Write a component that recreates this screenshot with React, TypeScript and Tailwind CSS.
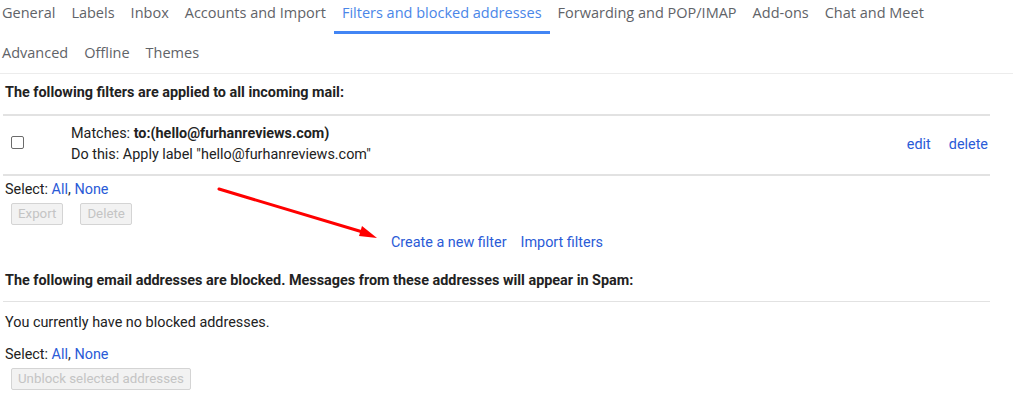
import React from "react";

const tabsRow1 = [
  "General",
  "Labels",
  "Inbox",
  "Accounts and Import",
  "Filters and blocked addresses",
  "Forwarding and POP/IMAP",
  "Add-ons",
  "Chat and Meet",
];
const tabsRow2 = ["Advanced", "Offline", "Themes"];

function Tab({ label, active }: { label: string; active?: boolean }) {
  return (
    <div
      className={
        "h-[34px] px-2 pt-[4px] text-[14.5px] leading-[18px] whitespace-nowrap " +
        (active
          ? "text-[#4a86e8] border-b-[3px] border-[#4285f4]"
          : "text-[#5f6368] border-b-[3px] border-transparent")
      }
    >
      {label}
    </div>
  );
}

function Link({ children }: { children: React.ReactNode }) {
  return <span className="text-[#2a5bd7]">{children}</span>;
}

function DisabledButton({ children }: { children: React.ReactNode }) {
  return (
    <div className="h-[22px] px-[6px] flex items-center border border-[#d4d4d4] rounded-[2px] bg-[#f2f2f2] text-[13.3px] text-[#c4c4c4]">
      {children}
    </div>
  );
}

export default function App() {
  return (
    <div
      className="relative w-[1020px] h-[404px] bg-white text-[#222] overflow-hidden"
      style={{ fontFamily: "Roboto, 'Liberation Sans', sans-serif" }}
    >
      {/* Tabs */}
      <div className="w-[1013px] border-b border-[#ececec] h-[74px]">
        <div className="flex flex-col gap-y-[6px] -ml-[6px]" style={{ fontFamily: "'Open Sans', Roboto, sans-serif" }}>
          <div className="flex">
            {tabsRow1.map((t) => (
              <Tab key={t} label={t} active={t === "Filters and blocked addresses"} />
            ))}
          </div>
          <div className="flex">
            {tabsRow2.map((t) => (
              <Tab key={t} label={t} />
            ))}
          </div>
        </div>
      </div>

      <div className="pl-[3px] w-[990px] text-[14.4px] leading-[20px]">
        <div className="pl-[2px] pt-[9px] h-[40px] font-bold">
          The following filters are applied to all incoming mail:
        </div>
        <div className="border-t-2 border-b-2 border-[#e2e2e2] h-[62px] flex items-start pt-[8px]">
          <div className="w-[68px] pl-[8px] pt-[12px]">
            <div className="w-[13px] h-[13px] border border-[#6b6b6b] rounded-[2px]" />
          </div>
          <div className="flex-1">
            <div>
              Matches: <span className="font-bold">to:(hello@furhanreviews.com)</span>
            </div>
            <div className="mt-[1px]">Do this: Apply label "hello@furhanreviews.com"</div>
          </div>
          <div className="flex gap-[18px] pt-[11px] pr-[2px]">
            <Link>edit</Link>
            <Link>delete</Link>
          </div>
        </div>
        <div className="pl-[2px] pt-[4px]">
          Select: <Link>All</Link>, <Link>None</Link>
        </div>
        <div className="flex gap-[17px] pl-[8px] mt-[3px]">
          <DisabledButton>Export</DisabledButton>
          <DisabledButton>Delete</DisabledButton>
        </div>
        <div className="flex gap-[14px] pl-[388px] mt-[8px]">
          <Link>Create a new filter</Link>
          <Link>Import filters</Link>
        </div>
        <div className="pl-[2px] pt-[18px] h-[49px] font-bold border-b border-[#e2e2e2]">
          The following email addresses are blocked. Messages from these addresses will appear in Spam:
        </div>
        <div className="pl-[2px] pt-[11px]">You currently have no blocked addresses.</div>
        <div className="pl-[2px] pt-[12px]">
          Select: <Link>All</Link>, <Link>None</Link>
        </div>
        <div className="flex pl-[8px] mt-[3px]">
          <DisabledButton>Unblock selected addresses</DisabledButton>
        </div>
      </div>

      {/* Red annotation arrow */}
      <svg className="absolute left-0 top-0 pointer-events-none" width="1020" height="404">
        <line x1="219" y1="189" x2="366" y2="233" stroke="#ff0000" strokeWidth="3" strokeLinecap="round" />
        <polygon points="377,238 362,226 359,236" fill="#ff0000" />
      </svg>
    </div>
  );
}
